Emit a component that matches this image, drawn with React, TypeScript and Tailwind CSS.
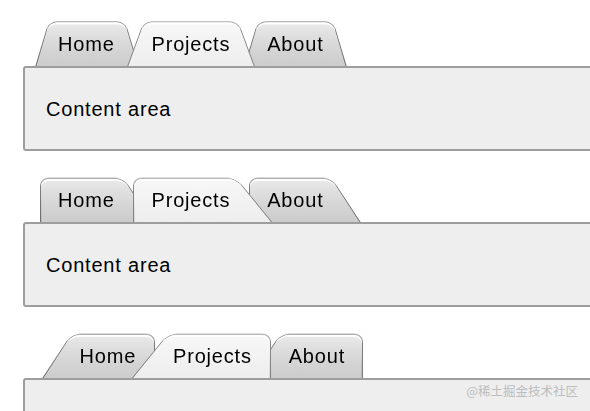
type Variant = "center" | "left" | "right";

const shapeClass: Record<Variant, string> = {
  center: "origin-bottom [transform:scale(1.1,1.34)_perspective(10px)_rotateX(4.47deg)]",
  left: "origin-bottom-left [transform:scale(1.2,1.33)_perspective(10px)_rotateX(4.47deg)]",
  right: "origin-bottom-right [transform:scale(1.2,1.33)_perspective(10px)_rotateX(4.47deg)]",
};

const tabs = [
  { label: "Home", z: "z-[2]" },
  { label: "Projects", z: "z-[3]", selected: true },
  { label: "About", z: "z-[1]" },
];

function Tab({
  label,
  selected = false,
  variant,
  z,
}: {
  label: string;
  selected?: boolean;
  variant: Variant;
  z: string;
}) {
  return (
    <a className={`relative block h-[45px] px-[18.5px] pt-px leading-[44px] text-black ${z}`}>
      <span
        className={`absolute inset-0 -z-10 rounded-t-[10px] border border-b-0 border-black/45 bg-[linear-gradient(rgba(255,255,255,.6),rgba(255,255,255,0))] shadow-[inset_0_3px_white] ${
          selected ? "bg-[#eee]" : "bg-[#ccc]"
        } ${shapeClass[variant]}`}
      />
      {label}
    </a>
  );
}

function TabSet({ variant, showText = true }: { variant: Variant; showText?: boolean }) {
  return (
    <section className="mb-[26px]">
      <nav className={`relative z-[1] flex ${variant === "right" ? "pl-[38px]" : "pl-[16.5px]"}`}>
        {tabs.map(tab => (
          <Tab key={tab.label} label={tab.label} selected={tab.selected} z={tab.z} variant={variant} />
        ))}
      </nav>
      <main className="flex h-[85px] w-[640px] items-center rounded-[3px] border-2 border-[#9d9d9d] bg-[#eee] px-[21px] leading-[30px]">
        {showText && "Content area"}
      </main>
    </section>
  );
}

export default function App() {
  return (
    <div className="relative h-[411px] w-[590px] overflow-hidden bg-white pl-[23px] pt-[21px] font-['Liberation_Sans',Arial,sans-serif] text-[20px] tracking-[0.8px] text-black">
      <TabSet variant="center" />
      <TabSet variant="left" />
      <TabSet variant="right" showText={false} />
      <span className="absolute right-[12px] top-[382px] z-10 font-['Noto_Sans_CJK_SC',sans-serif] text-[12.5px] tracking-normal text-[#bdbdbd]">
        @稀土掘金技术社区
      </span>
    </div>
  );
}
